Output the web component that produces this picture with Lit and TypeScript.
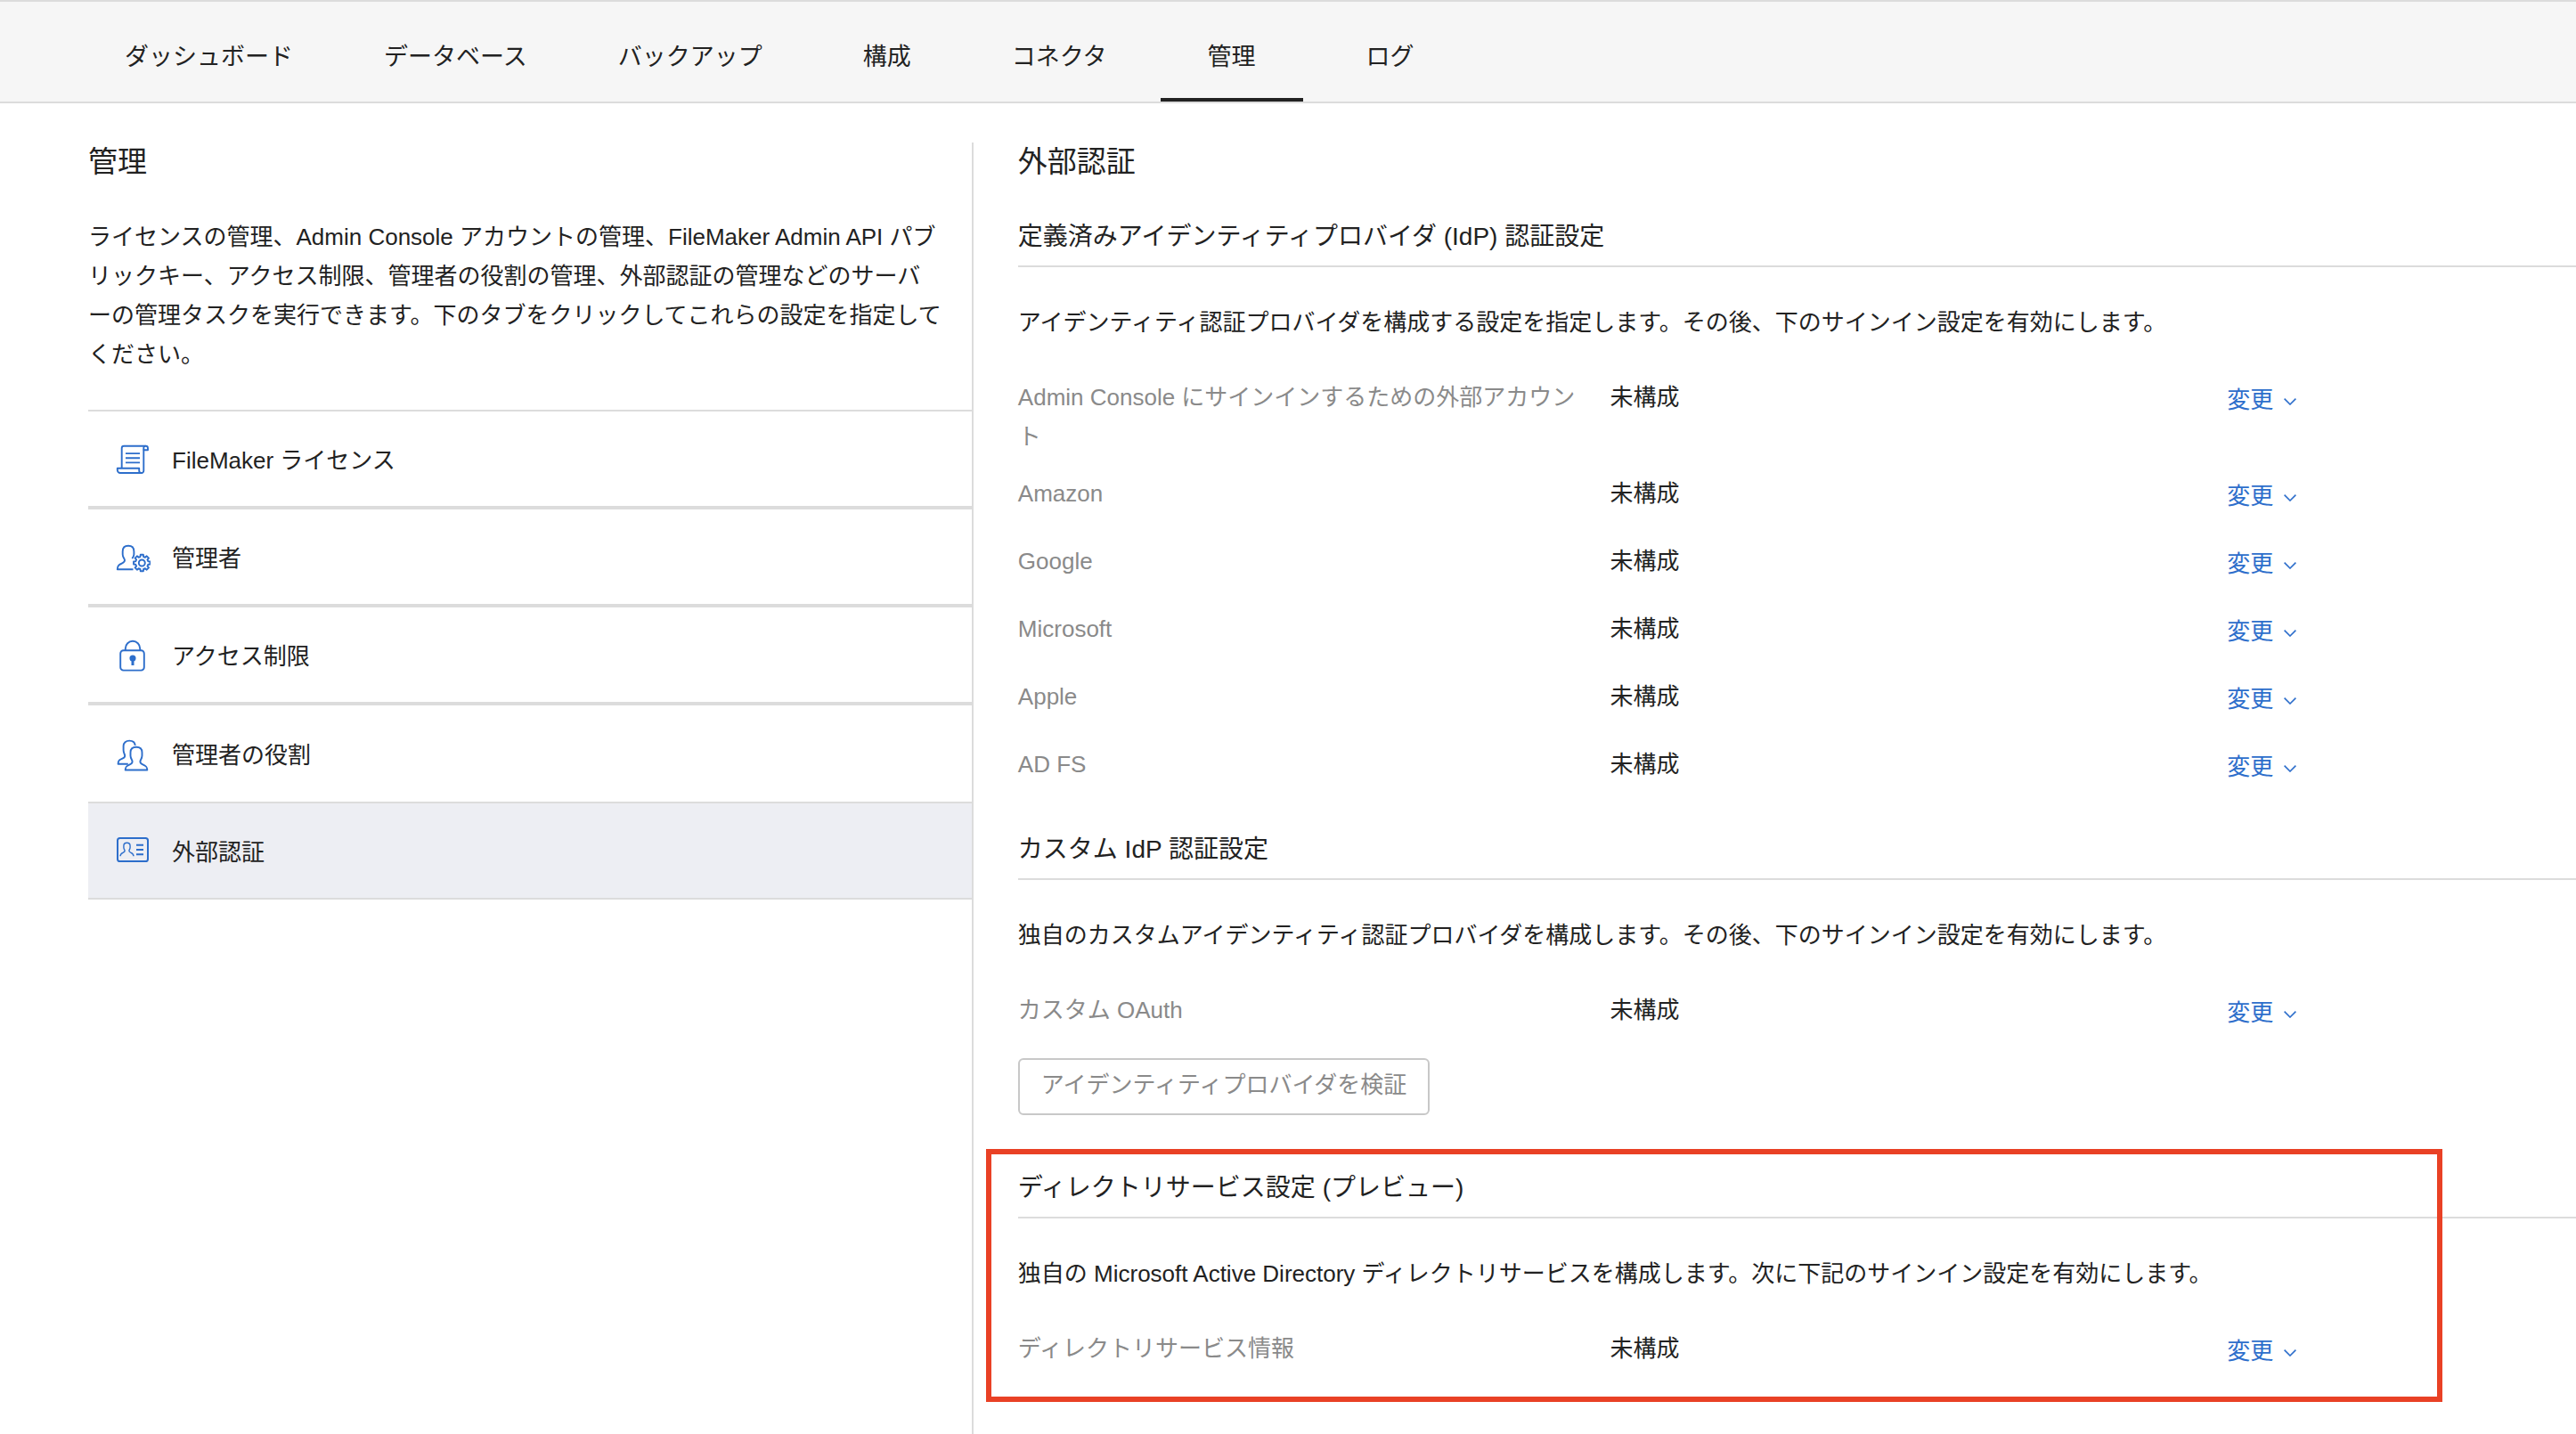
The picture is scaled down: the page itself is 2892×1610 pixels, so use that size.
import { LitElement, html, css, svg } from "lit";
import { customElement, property, state } from "lit/decorators.js";
import { classMap } from "lit/directives/class-map.js";

interface MenuEntry {
  id: string;
  label: string;
}

interface SettingSection {
  title: string;
  description: string;
  rows: string[];
  verify?: string;
  highlighted?: boolean;
}

const NAV = ["ダッシュボード", "データベース", "バックアップ", "構成", "コネクタ", "管理", "ログ"];

const MENU: MenuEntry[] = [
  { id: "license", label: "FileMaker ライセンス" },
  { id: "admin", label: "管理者" },
  { id: "lock", label: "アクセス制限" },
  { id: "roles", label: "管理者の役割" },
  { id: "card", label: "外部認証" },
];

const SECTIONS: SettingSection[] = [
  {
    title: "定義済みアイデンティティプロバイダ (IdP) 認証設定",
    description:
      "アイデンティティ認証プロバイダを構成する設定を指定します。その後、下のサインイン設定を有効にします。",
    rows: [
      "Admin Console にサインインするための外部アカウント",
      "Amazon",
      "Google",
      "Microsoft",
      "Apple",
      "AD FS",
    ],
  },
  {
    title: "カスタム IdP 認証設定",
    description:
      "独自のカスタムアイデンティティ認証プロバイダを構成します。その後、下のサインイン設定を有効にします。",
    rows: ["カスタム OAuth"],
    verify: "アイデンティティプロバイダを検証",
  },
  {
    title: "ディレクトリサービス設定 (プレビュー)",
    description:
      "独自の Microsoft Active Directory ディレクトリサービスを構成します。次に下記のサインイン設定を有効にします。",
    rows: ["ディレクトリサービス情報"],
    highlighted: true,
  },
];

/* Gear outline with eight square teeth. */
function gearPath(cx: number, cy: number, outer: number, inner: number): string {
  const points: string[] = [];
  for (let i = 0; i < 8; i++) {
    const mid = (i * Math.PI) / 4;
    const corners: [number, number][] = [
      [-0.25, inner],
      [-0.17, outer],
      [0.17, outer],
      [0.25, inner],
    ];
    for (const [offset, r] of corners) {
      const a = mid + offset;
      points.push(`${(cx + r * Math.cos(a)).toFixed(2)} ${(cy + r * Math.sin(a)).toFixed(2)}`);
    }
  }
  return `M${points.join("L")}Z`;
}

const ICONS: Record<string, unknown> = {
  license: svg`
    <path d="M7.7 30.5V8.2a2.4 2.4 0 0 1 2.4-2.4H34.6a2.4 2.4 0 0 1 2.4 2.4V10.3H32.3V33.6a2.4 2.4 0 0 1-2.4 2.4"/>
    <path d="M34.4 5.8a2.1 2.1 0 0 0-2.1 2.1V10.5"/>
    <path d="M2.8 30.8H27.2V33.4a2.6 2.6 0 0 0 2.6 2.6H6a3.2 3.2 0 0 1-3.2-3.2Z"/>
    <path d="M12 14.1H28M12 19.2H28M12 24.4H28"/>`,
  admin: svg`
    <path d="M20.5 34.3H2.8C2.8 29.8 5 28.8 8.2 27.3C10.6 26.2 11 25.6 11 24C11 22.4 8.7 20.6 8.7 17.6V14.2C8.7 10 11.2 7.8 15 7.8C18.9 7.8 21.4 10 21.4 14.2V17.6C21.4 19.6 20.2 21 19.3 22.1"/>
    <path d="${gearPath(30.3, 27, 9.4, 7.2)}"/>
    <circle cx="30.3" cy="27" r="3.5"/>`,
  lock: svg`
    <path d="M11.8 15.3V13A8.2 8.2 0 0 1 28.2 13V15.3"/>
    <rect x="6.2" y="15.3" width="26.6" height="22.3" rx="3.4"/>
    <circle class="solid" cx="20" cy="24" r="2.6"/>
    <path class="stem" d="M20 25V32"/>`,
  roles: svg`
    <path d="M14.8 31.7H3.6C3.6 27.7 5.2 27 8.4 25.7C11 24.7 11.4 24 11.2 22.2C10.9 20.2 9.6 19 9.6 16.2V11.6C9.6 7.8 12.4 5.6 16.3 5.6C19.9 5.6 22.5 7.6 22.7 11"/>
    <path d="M11.7 38.5H36.3C36.3 35 35 34 31.8 32.6C29.2 31.5 28.2 30.9 28.4 28.8C28.6 26.8 30.5 25.6 30.5 22.6V18.8C30.5 15 27.9 12.8 24 12.8C20.1 12.8 17.5 15 17.5 18.8V22.6C17.5 25.6 19.4 26.8 19.6 28.8C19.8 30.9 18.8 31.5 16.2 32.6C13 34 11.7 35 11.7 38.5Z"/>`,
  card: svg`
    <rect class="frame" x="3" y="6" width="34" height="26" rx="2.6"/>
    <path class="thin" d="M6 26.3C6 23.6 7.4 23 9 22.3C10.8 21.5 11.3 21.2 11.1 20C10.9 18.9 9.9 18.3 9.9 16.4V14.7C9.9 12.5 11.3 11.3 13.5 11.3C15.7 11.3 17.1 12.5 17.1 14.7V16.4C17.1 18.3 16.1 18.9 15.9 20C15.7 21.2 16.2 21.5 18 22.3C19.6 23 21 23.6 21 26.3"/>
    <path d="M24 13.7H32M24 19H32M24 24.3H32"/>`,
};

@customElement("menu-icon")
export class MenuIcon extends LitElement {
  static styles = css`
    :host {
      display: block;
      flex: none;
      width: 40px;
      height: 40px;
    }
    .glyph {
      display: block;
      width: 100%;
      height: 100%;
      fill: none;
      stroke: #2d6ecb;
      stroke-width: 1.9;
      stroke-linejoin: round;
    }
    .solid {
      fill: #2d6ecb;
    }
    .stem {
      stroke-width: 3;
    }
    .frame {
      stroke-width: 2;
    }
    .thin {
      stroke-width: 1.4;
    }
  `;

  @property() name = "";

  render() {
    return html`<svg class="glyph" viewBox="0 0 40 40" aria-hidden="true">${ICONS[this.name]}</svg>`;
  }
}

@customElement("setting-section")
export class SettingSectionElement extends LitElement {
  static styles = css`
    :host {
      display: block;
    }
    .section {
      position: relative;
    }
    .title {
      margin: 0;
      padding-bottom: 10px;
      border-bottom: 2px solid #dcdcdc;
      font-size: 28px;
      font-weight: 400;
      line-height: 44px;
    }
    .description {
      margin: 0;
      padding: 40px 0 24px;
    }
    .rows {
      margin: 0;
    }
    .row {
      display: grid;
      grid-template-columns: 38% 39.6% 1fr;
      box-sizing: border-box;
      min-height: 76px;
      padding: 16px 0 4px;
    }
    .label {
      padding-right: 20px;
      color: #8a8a8a;
    }
    .value {
      margin: 0;
    }
    .change {
      display: flex;
      align-items: center;
      gap: 12px;
      height: 44px;
      padding: 6px 0 0;
      border: 0;
      background: none;
      color: #2d6ecb;
      font: inherit;
      line-height: 38px;
      cursor: pointer;
    }
    .chevron {
      width: 14px;
      height: 8px;
      margin-top: 4px;
      fill: none;
      stroke: currentColor;
      stroke-width: 1.6;
    }
    .verify {
      display: block;
      box-sizing: border-box;
      height: 64px;
      margin-top: 16px;
      padding: 0 24px 4px;
      border: 2px solid #c8c8c8;
      border-radius: 6px;
      background: #fff;
      color: #8a8a8a;
      font: inherit;
    }
    .callout {
      position: absolute;
      top: -22px;
      bottom: -22px;
      left: -36px;
      right: 150px;
      border: 6px solid #e94125;
      pointer-events: none;
    }
  `;

  @property({ attribute: false }) section!: SettingSection;

  render() {
    const { title, description, rows, verify, highlighted } = this.section;
    return html`
      <section class="section">
        <h3 class="title">${title}</h3>
        <p class="description">${description}</p>
        <dl class="rows">
          ${rows.map(
            (label) => html`
              <div class="row">
                <dt class="label">${label}</dt>
                <dd class="value">未構成</dd>
                <dd class="value">
                  <button class="change" type="button">
                    変更
                    <svg class="chevron" viewBox="0 0 14 8" aria-hidden="true"><path d="M.6 .6L7 7L13.4 .6" /></svg>
                  </button>
                </dd>
              </div>
            `
          )}
        </dl>
        ${verify ? html`<button class="verify" type="button" disabled>${verify}</button>` : null}
        ${highlighted ? html`<div class="callout"></div>` : null}
      </section>
    `;
  }
}

@customElement("app-root")
export class AppRoot extends LitElement {
  static styles = css`
    :host {
      display: flex;
      flex-direction: column;
      min-height: 100vh;
      background: #fff;
      color: #222;
      font-family: "Liberation Sans", "Noto Sans CJK JP", sans-serif;
      font-size: 26px;
      line-height: 44px;
    }
    .topbar {
      display: flex;
      gap: 18px;
      padding-left: 98px;
      border-top: 2px solid #dcdcdc;
      border-bottom: 2px solid #dcdcdc;
      background: #f6f6f6;
    }
    .tab {
      box-sizing: border-box;
      min-width: 160px;
      padding: 40px 42px 24px;
      border-bottom: 4px solid transparent;
      color: inherit;
      font-size: 27px;
      text-align: center;
      text-decoration: none;
      white-space: nowrap;
    }
    .tab.active {
      border-bottom-color: #222;
    }
    .page {
      display: grid;
      flex: 1;
      grid-template-columns: 25fr 44fr;
      column-gap: 50px;
      padding: 44px 0 0 99px;
    }
    .sidebar {
      border-right: 2px solid #dcdcdc;
    }
    .heading {
      margin: 0;
      font-size: 33px;
      font-weight: 400;
      line-height: 44px;
    }
    .intro {
      margin: 0;
      padding: 40px 18px 40px 0;
    }
    .menu {
      margin: 0;
      padding: 0;
      list-style: none;
    }
    .entry {
      display: flex;
      align-items: center;
      gap: 24px;
      box-sizing: border-box;
      width: 100%;
      height: 110px;
      padding: 0 30px;
      border: 0 solid #dcdcdc;
      border-width: 2px 0;
      background: none;
      color: inherit;
      font: inherit;
      text-align: left;
      cursor: pointer;
    }
    .entry.open {
      border-bottom-width: 0;
    }
    .entry.active {
      background: #edeef3;
    }
    .entry-label {
      padding-top: 4px;
    }
    .content {
      display: flex;
      flex-direction: column;
      padding-bottom: 50px;
    }
    .sections {
      display: flex;
      flex-direction: column;
      padding-top: 40px;
    }
    .block + .block {
      margin-top: 36px;
    }
    .block + .block.spaced {
      margin-top: 60px;
    }
  `;

  @state() private tab = "管理";
  @state() private selected = "card";

  private renderEntry(entry: MenuEntry, index: number) {
    const next = MENU[index + 1];
    const classes = {
      entry: true,
      active: entry.id === this.selected,
      open: next !== undefined && next.id === this.selected,
    };
    return html`
      <li>
        <button class=${classMap(classes)} type="button" @click=${() => (this.selected = entry.id)}>
          <menu-icon name=${entry.id}></menu-icon>
          <span class="entry-label">${entry.label}</span>
        </button>
      </li>
    `;
  }

  render() {
    return html`
      <nav class="topbar">
        ${NAV.map(
          (name) => html`<a
            class=${classMap({ tab: true, active: name === this.tab })}
            href="#"
            @click=${(e: Event) => {
              e.preventDefault();
              this.tab = name;
            }}
            >${name}</a
          >`
        )}
      </nav>
      <main class="page">
        <aside class="sidebar">
          <h1 class="heading">管理</h1>
          <p class="intro">
            ライセンスの管理、Admin Console アカウントの管理、FileMaker Admin API パブリックキー、アクセス制限、管理者の役割の管理、外部認証の管理などのサーバ<br />ーの管理タスクを実行できます。下のタブをクリックしてこれらの設定を指定してください。
          </p>
          <ul class="menu">
            ${MENU.map((entry, i) => this.renderEntry(entry, i))}
          </ul>
        </aside>
        <div class="content">
          <h2 class="heading">外部認証</h2>
          <div class="sections">
            ${SECTIONS.map(
              (section, i) => html`<setting-section
                class=${classMap({ block: true, spaced: i > 0 && SECTIONS[i - 1].verify !== undefined })}
                .section=${section}
              ></setting-section>`
            )}
          </div>
        </div>
      </main>
    `;
  }
}
